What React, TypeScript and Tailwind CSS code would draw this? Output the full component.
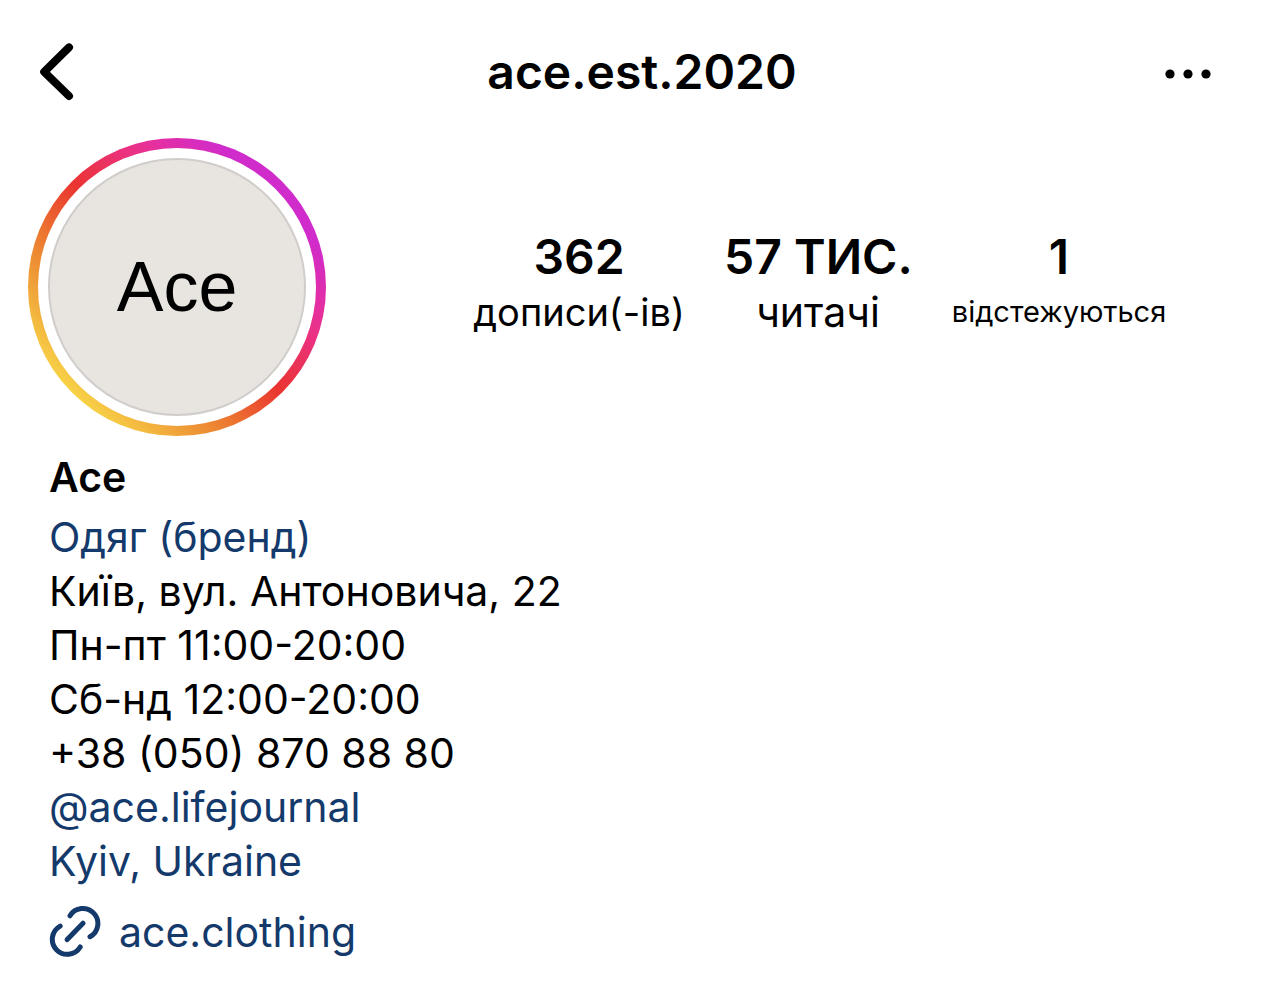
import React from 'react';

const stats = [
  { value: '362', label: 'дописи(-ів)', width: 'w-[218px]', size: 'text-[38px]' },
  { value: '57 ТИС.', label: 'читачі', width: 'w-[188px]', size: 'text-[41px]' },
  { value: '1', label: 'відстежуються', width: 'w-[222px]', size: 'text-[29px]' },
];

function StoryAvatar() {
  return (
    <div className="size-[298px] shrink-0 rounded-full bg-[linear-gradient(to_bottom_left,#d02bcb_19%,#e22fa8_28%,#eb3184_35%,#ea3430_50%,#ec7830_64%,#ef9e38_73%,#f8d548_86%)] p-[10px]">
      <div className="size-full rounded-full bg-white p-[10px]">
        <div className="flex size-full items-center justify-center rounded-full border-2 border-[#d0cdca] bg-[#e8e5e1] font-['Liberation_Sans',sans-serif] text-[70px] leading-[80px]">
          Ace
        </div>
      </div>
    </div>
  );
}

export default function App() {
  return (
    <main className="min-h-screen bg-white pb-5 font-['Inter',sans-serif] text-black">
      <header className="grid grid-cols-[1fr_auto_1fr] items-center px-[34px] pt-9">
        <button aria-label="Назад" className="justify-self-start">
          <svg viewBox="0 0 44 72" className="h-[72px] w-11" fill="none" stroke="currentColor" strokeWidth="8" strokeLinecap="round" strokeLinejoin="round">
            <path d="M35 11.4 10.2 35.8 35 60" />
          </svg>
        </button>
        <h1 className="text-[48px] leading-[72px] font-semibold">ace.est.2020</h1>
        <button aria-label="Більше" className="mr-9 justify-self-end">
          <svg viewBox="0 0 50 20" className="h-5 w-[50px]" fill="currentColor">
            <circle cx="6" cy="12" r="4.6" />
            <circle cx="24" cy="12" r="4.6" />
            <circle cx="42" cy="12" r="4.6" />
          </svg>
        </button>
      </header>
      <section className="flex items-center pt-[30px] pl-7">
        <StoryAvatar />
        <div className="mb-2 ml-36 flex gap-9">
          {stats.map((s) => (
            <div key={s.label} className={`${s.width} text-center whitespace-nowrap`}>
              <div className="text-[48px] leading-[58px] font-semibold">{s.value}</div>
              <div className={`${s.size} leading-[52px]`}>{s.label}</div>
            </div>
          ))}
        </div>
      </section>
      <section className="px-[49px] pt-[14px] text-[41px] leading-[54px]">
        <h2 className="mb-[6px] font-semibold">Ace</h2>
        <p className="text-[#14396b]">Одяг (бренд)</p>
        <p>Київ, вул. Антоновича, 22</p>
        <p>Пн-пт 11:00-20:00</p>
        <p>Сб-нд 12:00-20:00</p>
        <p>+38 (050) 870 88 80</p>
        <p><a href="#journal" className="text-[#14396b]">@ace.lifejournal</a></p>
        <p><a href="#location" className="text-[#14396b]">Kyiv, Ukraine</a></p>
        <a href="#website" className="mt-[17px] flex items-center gap-[18px] text-[#14396b]">
          <svg viewBox="0 0 52 52" className="size-[52px]" fill="none" stroke="currentColor" strokeWidth="5" strokeLinecap="round">
            <path d="M21 9.8A15 15 0 1 1 41 30.7M31.2 41A15 15 0 1 1 11.2 20.1M18.2 33.6 34 17.2" />
          </svg>
          ace.clothing
        </a>
      </section>
    </main>
  );
}
